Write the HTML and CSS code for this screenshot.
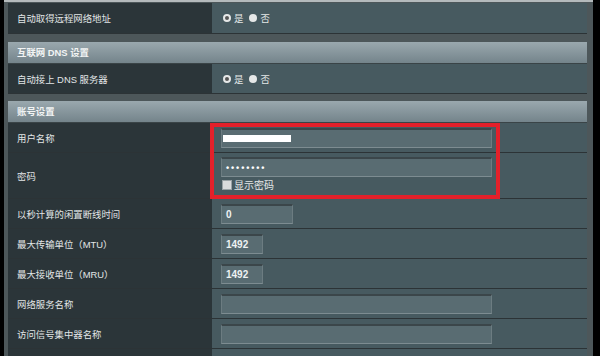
FILE: index.html
```html
<!DOCTYPE html>
<html lang="zh-CN">
<head>
  <meta charset="UTF-8">
  <title>WAN 设置</title>
  <link rel="stylesheet" href="styles.css">
</head>
<body>
  <div class="page">
    <!-- 上一组的最后一行 -->
    <div class="section">
      <div class="row">
        <div class="label">自动取得远程网络地址</div>
        <div class="value">
          <span class="radio checked"></span><span class="opt">是</span>
          <span class="radio"></span><span class="opt">否</span>
        </div>
      </div>
    </div>

    <!-- 互联网 DNS 设置 -->
    <div class="section">
      <div class="section-title">互联网 DNS 设置</div>
      <div class="row">
        <div class="label">自动接上 DNS 服务器</div>
        <div class="value">
          <span class="radio checked"></span><span class="opt">是</span>
          <span class="radio"></span><span class="opt">否</span>
        </div>
      </div>
    </div>

    <!-- 账号设置 -->
    <div class="section">
      <div class="section-title">账号设置</div>
      <div class="row">
        <div class="label">用户名称</div>
        <div class="value">
          <div class="field long"><span class="masked"></span></div>
        </div>
      </div>
      <div class="row tall">
        <div class="label">密码</div>
        <div class="value stack">
          <div class="field long"><span class="dots">••••••••</span></div>
          <label class="show-pass"><span class="checkbox"></span>显示密码</label>
        </div>
      </div>
      <div class="row">
        <div class="label">以秒计算的闲置断线时间</div>
        <div class="value">
          <div class="field medium">0</div>
        </div>
      </div>
      <div class="row">
        <div class="label">最大传输单位（MTU）</div>
        <div class="value">
          <div class="field short">1492</div>
        </div>
      </div>
      <div class="row">
        <div class="label">最大接收单位（MRU）</div>
        <div class="value">
          <div class="field short">1492</div>
        </div>
      </div>
      <div class="row">
        <div class="label">网络服务名称</div>
        <div class="value">
          <div class="field long"></div>
        </div>
      </div>
      <div class="row">
        <div class="label">访问信号集中器名称</div>
        <div class="value">
          <div class="field long"></div>
        </div>
      </div>
      <div class="row">
        <div class="label"></div>
        <div class="value"></div>
      </div>
    </div>

    <!-- 标注框 -->
    <div class="highlight"></div>
  </div>
</body>
</html>
```

FILE: styles.css
```css
html {
  overflow: hidden;
}

body {
  margin: 0;
  padding: 0;
  background-color: #000;
  font-family: "Liberation Sans", "Noto Sans CJK SC", sans-serif;
  font-size: 9.4px;
  color: #e2e6e7;
  height: 356px;
  overflow: hidden;
}

.page {
  position: relative;
  margin-left: 4px;
  width: 589px;
  height: 356px;
  overflow: hidden;
  box-sizing: border-box;
  padding: 1px 6px 0 4px;
  border-top: 2px solid #b4babc;
  background-color: #4d575a;
}

.section {
  margin-bottom: 8px;
}

.section + .section {
  margin-bottom: 7px;
}

.section-title {
  height: 21px;
  line-height: 21px;
  padding-left: 9px;
  font-weight: bold;
  color: #f2f4f4;
  background: linear-gradient(#9aa8ae, #74848b);
  border-bottom: 1px solid #3a4447;
}

.row {
  display: grid;
  grid-template-columns: 204px 1fr;
  height: 29px;
  border-bottom: 1px solid #2c3336;
}

.section:first-child .row {
  height: 30px;
}

.row.tall {
  height: 45px;
}

.label {
  display: flex;
  align-items: center;
  padding-left: 9px;
  background-color: #2b3539;
}

.value {
  display: flex;
  align-items: center;
  padding-left: 9px;
  background-color: #475a60;
}

.value.stack {
  flex-direction: column;
  align-items: flex-start;
  justify-content: flex-start;
  padding-top: 4px;
}

/* radio buttons */
.radio {
  width: 8px;
  height: 8px;
  border-radius: 50%;
  background-color: #e6e8e8;
  box-sizing: border-box;
  margin-left: 2px;
  margin-right: 3px;
}

.radio.checked {
  border: 2px solid #e6e8e8;
  background-color: #555;
}

.opt {
  margin-right: 4px;
  color: #e4e8e8;
}

/* text fields */
.field {
  height: 20px;
  box-sizing: border-box;
  display: flex;
  align-items: center;
  padding-left: 4px;
  background-color: #596c72;
  border: 1px solid #6c7c81;
  border-top: 2px solid #3b464a;
  border-bottom: 1px solid #7d8c91;
  font-weight: bold;
  font-size: 10px;
  color: #eef2f3;
}

.field.long {
  width: 271px;
}

.field.medium {
  width: 72px;
}

.field.short {
  width: 42px;
}

.masked {
  display: block;
  width: 68px;
  height: 7px;
  margin-left: -3px;
  background-color: #fff;
}

.dots {
  font-size: 9px;
  letter-spacing: 1.9px;
  color: #fff;
  margin-top: 1px;
}

.show-pass {
  display: flex;
  align-items: flex-end;
  margin-top: 3px;
  margin-left: 1px;
  color: #e4e8e8;
  font-size: 10px;
  line-height: 12px;
}

.checkbox {
  width: 10px;
  height: 10px;
  box-sizing: border-box;
  margin-right: 2px;
  margin-bottom: 2px;
  background-color: #d9dbdc;
  border: 1px solid #9aa3a6;
}

/* red annotation box */
.highlight {
  position: absolute;
  left: 206px;
  top: 121px;
  width: 290px;
  height: 76px;
  box-sizing: border-box;
  border: 4px solid #e3202a;
}
```
